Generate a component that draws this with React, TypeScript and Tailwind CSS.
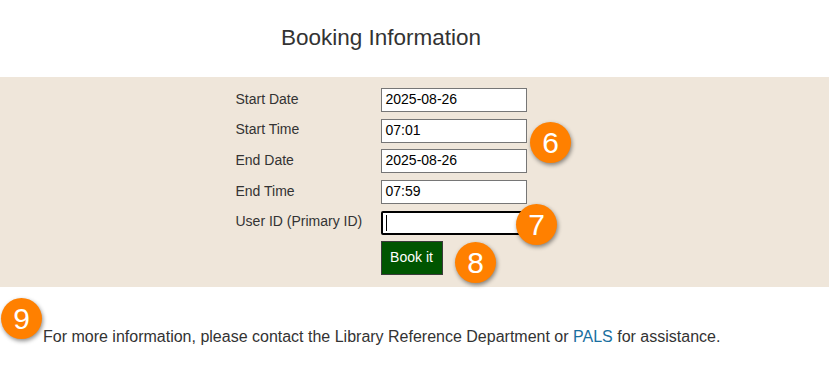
import React from "react";

function Badge({ n, className }: { n: string; className: string }) {
  return (
    <div
      className={
        "absolute w-[41px] h-[41px] rounded-full bg-[#ff8000] text-white flex items-center justify-center text-[30px] leading-none shadow-[1px_2px_4px_rgba(0,0,0,0.45)] " +
        className
      }
      style={{ fontFamily: '"Liberation Sans", Arial, sans-serif' }}
    >
      <span className="mt-[1px]">{n}</span>
    </div>
  );
}

const rows = [
  { label: "Start Date", value: "2025-08-26" },
  { label: "Start Time", value: "07:01" },
  { label: "End Date", value: "2025-08-26" },
  { label: "End Time", value: "07:59" },
];

export default function App() {
  return (
    <div
      className="relative w-[829px] h-[368px] bg-white text-[#333] overflow-hidden"
      style={{ fontFamily: '"Liberation Sans", Arial, sans-serif' }}
    >
      <div className="w-[762px] h-[77px] flex items-center justify-center">
        <h1 className="text-[22.5px] leading-none font-normal text-[#333]">
          Booking Information
        </h1>
      </div>
      <div className="w-full bg-[#efe6da] pt-[11px] pb-[12px]">
        <div className="w-[762px] flex justify-center">
          <div className="flex flex-col">
            {rows.map((r) => (
              <div key={r.label} className="flex items-center h-[30.6px]">
                <div className="w-[145px] text-[14px] pb-[8px]">{r.label}</div>
                <div className="w-[146px] h-[24px] border border-[#767676] bg-white text-black text-[14px] flex items-center pl-[4px] pb-[1px] mb-[6px]">
                  {r.value}
                </div>
              </div>
            ))}
            <div className="flex items-center h-[30.6px]">
              <div className="w-[145px] text-[14px] pb-[8px]">User ID (Primary ID)</div>
              <div className="w-[146px] h-[24px] border-2 border-black rounded-[2px] bg-white flex items-center pl-[3px] mb-[6px]">
                <div className="w-[1px] h-[16px] bg-black" />
              </div>
            </div>
            <div className="flex">
              <div className="w-[145px]" />
              <div className="w-[62px] h-[34px] bg-[#005500] border border-[#3a3a3a] text-white text-[14px] flex items-center justify-center">
                Book it
              </div>
            </div>
          </div>
        </div>
      </div>
      <div className="pl-[43px] pt-[41px] text-[16px] leading-[18px]">
        For more information, please contact the Library Reference Department or{" "}
        <span className="text-[#1a6fa0]">PALS</span> for assistance.
      </div>
      <Badge n="6" className="left-[530px] top-[122px]" />
      <Badge n="7" className="left-[516px] top-[204px]" />
      <Badge n="8" className="left-[455px] top-[242px]" />
      <Badge n="9" className="left-[1px] top-[298px]" />
    </div>
  );
}
